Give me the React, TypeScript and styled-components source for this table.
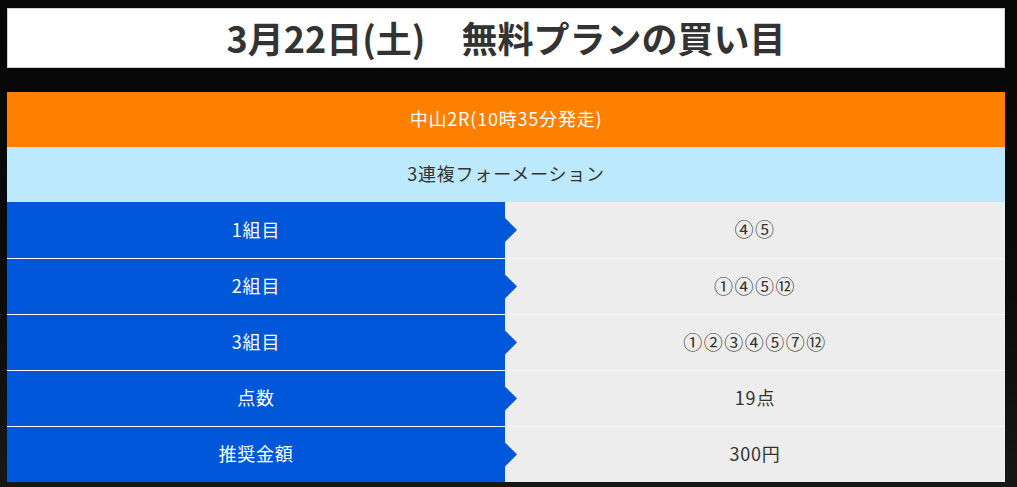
import styled, { createGlobalStyle } from "styled-components";

const GlobalStyle = createGlobalStyle`
  html, body {
    margin: 0;
    padding: 0;
    background: #0b0b0b;
  }
  body {
    font-family: "Noto Sans CJK JP", "Noto Sans", sans-serif;
  }
`;

const Page = styled.div`
  width: 1017px;
  height: 487px;
  box-sizing: border-box;
  padding: 8px 12px 0 7px;
  display: flex;
  flex-direction: column;
  gap: 24px;
  background: linear-gradient(to bottom, #070707 0%, #0b0b0b 60%, #171717 100%);
  overflow: hidden;
`;

const TitleBox = styled.div`
  height: 60px;
  background: #ffffff;
  border: 1px solid #cfcfcf;
  box-sizing: border-box;
  display: flex;
  align-items: center;
  justify-content: center;
`;

const Title = styled.h1`
  margin: 0 0 2px;
  font-size: 36px;
  font-weight: 700;
  color: #333333;
`;

const Table = styled.div`
  display: flex;
  flex-direction: column;
`;

const Band = styled.div<{ $tone: "race" | "kind" }>`
  height: 55px;
  display: flex;
  align-items: center;
  justify-content: center;
  font-size: 18px;
  letter-spacing: 0.8px;
  padding-bottom: 3px;
  box-sizing: border-box;
  background: ${(p) => (p.$tone === "race" ? "#ff7f00" : "#bde9fc")};
  color: ${(p) => (p.$tone === "race" ? "#ffffff" : "#333333")};
`;

const Row = styled.div`
  height: 56px;
  display: grid;
  grid-template-columns: 498px 1fr;
  border-top: 1px solid #f7f7f7;
  box-sizing: border-box;
  &:first-of-type {
    border-top: none;
  }
`;

const Label = styled.div`
  position: relative;
  background: #0057d9;
  color: #ffffff;
  font-size: 18px;
  letter-spacing: 0.8px;
  padding-bottom: 3px;
  display: flex;
  align-items: center;
  justify-content: center;

  &::after {
    content: "";
    position: absolute;
    right: -12px;
    top: 50%;
    margin-top: -12px;
    width: 12px;
    height: 24px;
    background: #0057d9;
    clip-path: polygon(0 0, 100% 50%, 0 100%);
  }
`;

const Value = styled.div<{ $marks?: boolean }>`
  background: #ededed;
  color: #333333;
  font-size: ${(p) => (p.$marks ? "19px" : "18px")};
  letter-spacing: ${(p) => (p.$marks ? "1.5px" : "0.8px")};
  padding-bottom: 3px;
  display: flex;
  align-items: center;
  justify-content: center;
`;

const rows = [
  { label: "1組目", value: "④⑤", marks: true },
  { label: "2組目", value: "①④⑤⑫", marks: true },
  { label: "3組目", value: "①②③④⑤⑦⑫", marks: true },
  { label: "点数", value: "19点" },
  { label: "推奨金額", value: "300円" },
];

function App() {
  return (
    <>
      <GlobalStyle />
      <Page>
        <TitleBox>
          <Title>3月22日(土)　無料プランの買い目</Title>
        </TitleBox>
        <Table>
          <Band $tone="race">中山2R(10時35分発走)</Band>
          <Band $tone="kind">3連複フォーメーション</Band>
          <div>
            {rows.map((r) => (
              <Row key={r.label}>
                <Label>{r.label}</Label>
                <Value $marks={r.marks}>{r.value}</Value>
              </Row>
            ))}
          </div>
        </Table>
      </Page>
    </>
  );
}

export default App;
